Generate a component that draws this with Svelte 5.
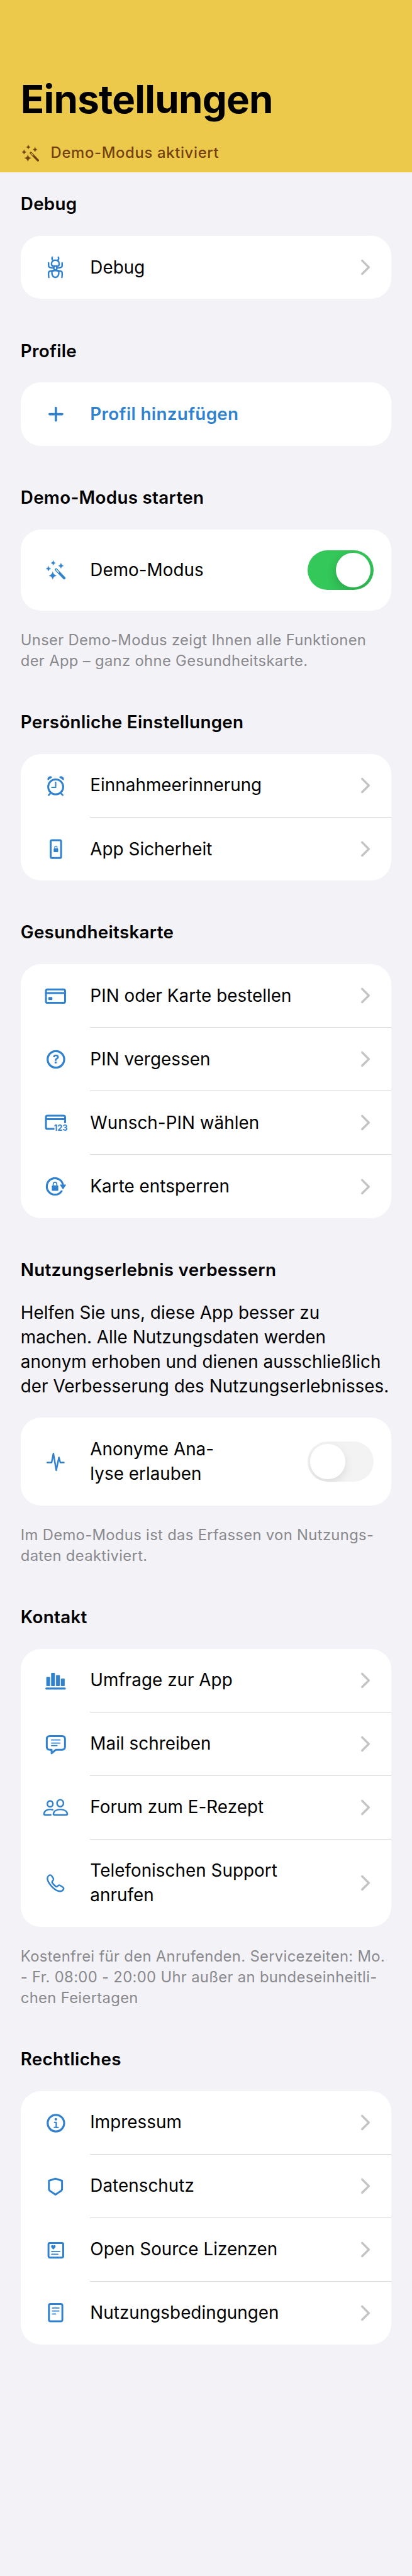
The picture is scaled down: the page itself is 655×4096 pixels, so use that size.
<script>
  let demoMode = $state(true);

  const sections = [
    { title: 'Debug', rows: [{ icon: 'bug', label: 'Debug' }] },
    { title: 'Profile', rows: [{ icon: 'plus', label: 'Profil hinzufügen', kind: 'action' }] },
    {
      title: 'Demo-Modus starten',
      rows: [{ icon: 'wand', label: 'Demo-Modus', kind: 'switch' }],
      foot: ['Unser Demo-Modus zeigt Ihnen alle Funktionen', 'der App – ganz ohne Gesundheitskarte.']
    },
    {
      title: 'Persönliche Einstellungen',
      rows: [
        { icon: 'alarm', label: 'Einnahmeerinnerung' },
        { icon: 'device', label: 'App Sicherheit' }
      ]
    },
    {
      title: 'Gesundheitskarte',
      rows: [
        { icon: 'card', label: 'PIN oder Karte bestellen' },
        { icon: 'question', label: 'PIN vergessen' },
        { icon: 'cardpin', label: 'Wunsch-PIN wählen' },
        { icon: 'unlock', label: 'Karte entsperren' }
      ]
    },
    {
      title: 'Nutzungserlebnis verbessern',
      intro: [
        'Helfen Sie uns, diese App besser zu',
        'machen. Alle Nutzungsdaten werden',
        'anonym erhoben und dienen ausschließlich',
        'der Verbesserung des Nutzungserlebnisses.'
      ],
      rows: [{ icon: 'pulse', label: 'Anonyme Ana-\nlyse erlauben', kind: 'disabled', tall: true }],
      foot: ['Im Demo-Modus ist das Erfassen von Nutzungs-', 'daten deaktiviert.']
    },
    {
      title: 'Kontakt',
      rows: [
        { icon: 'bars', label: 'Umfrage zur App' },
        { icon: 'bubble', label: 'Mail schreiben' },
        { icon: 'people', label: 'Forum zum E-Rezept' },
        { icon: 'phone', label: 'Telefonischen Support\nanrufen', tall: true }
      ],
      foot: [
        'Kostenfrei für den Anrufenden. Servicezeiten: Mo.',
        '- Fr. 08:00 - 20:00 Uhr außer an bundeseinheitli-',
        'chen Feiertagen'
      ]
    },
    {
      title: 'Rechtliches',
      rows: [
        { icon: 'info', label: 'Impressum' },
        { icon: 'shield', label: 'Datenschutz' },
        { icon: 'licence', label: 'Open Source Lizenzen' },
        { icon: 'document', label: 'Nutzungsbedingungen' }
      ]
    }
  ];

  // Four-pointed sparkle centred on (x, y)
  const star = (x, y, r) => {
    const k = r * 0.17;
    return `M${x} ${y - r}Q${x + k} ${y - k} ${x + r} ${y}Q${x + k} ${y + k} ${x} ${y + r}Q${x - k} ${y + k} ${x - r} ${y}Q${x - k} ${y - k} ${x} ${y - r}z`;
  };
</script>

{#snippet wand(background)}
  <g fill="currentColor" stroke="currentColor" stroke-width=".6">
    <path d={star(30.3, 13.4, 5.2)} />
    <path d={star(48.3, 20, 6)} />
    <path d={star(19, 26.6, 5.8)} />
    <path d={star(29, 42.8, 8.6)} />
  </g>
  <path d="M37 29L56 48.8" stroke-width="6" />
  <path d="M37.2 29.3L43 35.3" stroke={background} stroke-width="2.2" />
{/snippet}

{#snippet glyph(name)}
  <svg class="icon" viewBox="0 0 72 60" fill="none" stroke="currentColor" stroke-width="4.4" stroke-linecap="round" stroke-linejoin="round">
    {#if name === 'bug'}
      <g stroke-width="3.6">
        <path d="M28 5.8c-1.3 3.4-.4 6 2.2 7.8M42.3 5.8c1.3 3.4.4 6-2.2 7.8" />
        <path d="M26.2 21.5c0-5.5 3.5-8.6 9-8.6s9 3.1 9 8.6c0 3-1.9 4.7-4.5 4.7h-9c-2.6 0-4.5-1.7-4.5-4.7z" />
        <ellipse cx="35.2" cy="31" rx="3.7" ry="4.4" />
        <path d="M19.4 19v6.3c0 3 1.5 4.4 4.5 4.7l7 .8M51 19v6.3c0 3-1.5 4.4-4.5 4.7l-7 .8" />
        <path d="M20 53c-.9-5-1-8-.6-11 .3-2.2 1.5-3.3 4-3.8l8.2-1.5M50.4 53c.9-5 1-8 .6-11-.3-2.2-1.5-3.3-4-3.8l-8.2-1.5" />
        <path d="M27.2 39.5c-.6 7 1.9 13.3 8 13.3s8.6-6.3 8-13.3c-2-1.8-5-2.5-8-2.5s-6 .7-8 2.5z" />
      </g>
    {:else if name === 'plus'}
      <path d="M36.500 15.500v29.500M21.700 30.200h29.600" stroke-width="5.300" />
    {:else if name === 'wand'}
      {@render wand('#fff')}
    {:else if name === 'alarm'}
      <circle cx="36" cy="32.500" r="17.500" />
      <path d="M36 21.500v12.200h-9" stroke-width="3" />
      <path d="M23 48.500l-3.300 3.200M49 48.500l3.300 3.200" stroke-width="3.800" />
      <path d="M18 16c-1.600-5.200 4.300-9.200 9-6.200zM54 16c1.600-5.200-4.300-9.200-9-6.200z" fill="currentColor" stroke-width="1.800" />
    {:else if name === 'device'}
      <rect x="24.300" y="8.900" width="24.300" height="41.500" rx="3" />
      <rect x="31.300" y="28" width="10.400" height="8.600" rx="1.200" fill="currentColor" stroke="none" />
      <path d="M33.600 28.500v-2.500a2.900 3.300 0 0 1 5.800 0v2.500" stroke-width="1.800" />
    {:else if name === 'card'}
      <rect x="13.300" y="14.900" width="44.600" height="31.400" rx="3.500" />
      <path d="M13.300 23.600h44.600" />
      <rect x="19" y="32.800" width="9.200" height="7.200" rx="1.800" fill="currentColor" stroke="none" />
    {:else if name === 'question'}
      <circle cx="36.500" cy="30" r="19.300" stroke-width="4.800" />
      <text x="36.500" y="40" font-size="28" text-anchor="middle">?</text>
    {:else if name === 'cardpin'}
      <path d="M33 44.200H16.800c-2.300 0-3.500-1.200-3.500-3.500v-24c0-2.300 1.200-3.500 3.500-3.500h37.600c2.300 0 3.500 1.200 3.500 3.500V30.300M13.300 21.400h44.600" stroke-linecap="butt" />
      <text class="digits" x="31.800" y="48" font-size="19.700" textLength="32" lengthAdjust="spacingAndGlyphs">123</text>
    {:else if name === 'unlock'}
      <path d="M53.200 27.500A19.100 19.100 0 1 0 49.800 41.200" stroke-width="4.600" />
      <path d="M47.200 26.700h11.800l-5.900 8.700z" fill="currentColor" stroke-width="2.200" />
      <rect x="27" y="27.800" width="15" height="12.600" rx="1.800" fill="currentColor" stroke="none" />
      <path d="M30.200 28.500v-3.500a4.200 4.600 0 0 1 8.400 0v3.500" stroke-width="2.500" />
    {:else if name === 'pulse'}
      <path d="M16.500 31.600h10L30.700 10.800 37.300 49.600 43.500 19.800 46.700 31.600h8.300" stroke-width="3.700" />
    {:else if name === 'bars'}
      <path d="M14 48.300h43.300" stroke-width="4.600" />
      <g fill="currentColor" stroke="none">
        <rect x="14.100" y="21.300" width="8.900" height="21.400" rx="1.500" />
        <rect x="25.300" y="11.600" width="9" height="31.100" rx="1.500" />
        <rect x="36.800" y="16.700" width="9" height="26" rx="1.500" />
        <rect x="48" y="24.900" width="9" height="17.800" rx="1.500" />
      </g>
    {:else if name === 'bubble'}
      <path d="M22 11h29c4.500 0 6.700 2.300 6.700 6.800v18.200c0 4.500-2.200 6.800-6.700 6.800H36.500L26.500 51V42.800H22c-4.500 0-6.800-2.300-6.800-6.800V17.800C15.200 13.300 17.500 11 22 11z" />
      <path d="M26.300 20h19.800M26.300 27.200h19.800M26.300 33.200h12.800" stroke-width="2.600" />
    {:else if name === 'people'}
      <g stroke-width="3.600">
        <ellipse cx="46.600" cy="19.400" rx="7.500" ry="8.200" />
        <ellipse cx="23" cy="20.800" rx="6.500" ry="7" />
        <path d="M30.600 44.500C31.500 38 38 33.900 46.900 33.900S62.300 38 63.200 44.500c.1 1.400-.5 2-2 2H32.600c-1.500 0-2.100-.6-2-2z" />
        <path d="M24.500 46.500H10.600c-1.500 0-2.100-.6-2-2C9.600 37.600 15.500 33.900 23 33.900c2.300 0 4.300.3 6 .8" />
      </g>
    {:else if name === 'phone'}
      <path d="M23.500 10.800c2 0 3 1.500 4 3.200l3 5c1 1.800.5 3-.6 4.300l-2 2.300c-1 1.200-.9 2 0 3.400 2.300 3.500 5 6.300 8.500 8.600 1.400.9 2.300.9 3.400-.1l2.200-2c1.300-1.100 2.600-1.400 4.200-.4l6 3.800c2.500 1.700 2.900 3.500 1.700 5.600-2.400 4-6.500 5.200-12 3.600C33 45.500 20.500 33 17.200 22.500c-1.400-5 .5-9.200 4-11.200.8-.4 1.500-.5 2.300-.5z" stroke-width="3.600" />
    {:else if name === 'info'}
      <circle cx="36.500" cy="30.800" r="19.200" stroke-width="4.700" />
      <circle cx="36.400" cy="21.600" r="3" fill="currentColor" stroke="none" />
      <path d="M33.300 29h3.900v11.700M32.700 40.700h9" stroke-width="3.200" />
    {:else if name === 'shield'}
      <path d="M35.500 12L50.800 16.800V35.500c0 3-1.700 5-4.300 6.500L35.500 49.300 24.500 42c-2.600-1.500-4.300-3.500-4.300-6.500V16.800z" />
    {:else if name === 'licence'}
      <rect x="19.200" y="13.800" width="34.300" height="34.100" rx="3" />
      <path d="M30.500 28.500c-7-4.500-5.500-9.300-2.600-9.300 1.400 0 2.200.8 2.600 1.700.4-.9 1.200-1.700 2.600-1.700 2.900 0 4.400 4.800-2.600 9.300z" fill="currentColor" stroke-width=".6" />
      <path d="M26.500 33.600h19.500M26.500 40.300h14.800" stroke-width="2.600" />
    {:else if name === 'document'}
      <rect x="20.200" y="9.700" width="31.300" height="40.200" rx="3.500" />
      <path d="M28.300 18.900h15.400M28.300 25.800h15.400M28.300 32.900h7.600" stroke-width="2.600" />
    {/if}
  </svg>
{/snippet}

<div class="page">
  <header>
    <h1>Einstellungen</h1>
    <div class="banner">
      <svg viewBox="0 0 72 60" fill="none" stroke="currentColor" stroke-linecap="round">{@render wand('#ecc94b')}</svg>
      <span>Demo-Modus aktiviert</span>
    </div>
  </header>

  <main>
    {#each sections as section}
      <section class:noted={section.foot}>
        <h2>{section.title}</h2>
        {#if section.intro}
          <p class="intro">{section.intro.join('\n')}</p>
        {/if}
        <div class="card">
          {#each section.rows as row}
            <div class="row" class:tall={row.tall} class:switch-row={row.kind === 'switch'}>
              <div class="lead">{@render glyph(row.icon)}</div>
              <div class="body">
                <span class="label" class:action={row.kind === 'action'}>{row.label}</span>
                {#if row.kind === 'switch'}
                  <button class="toggle" class:on={demoMode} role="switch" aria-checked={demoMode} aria-label={row.label} onclick={() => (demoMode = !demoMode)}><i></i></button>
                {:else if row.kind === 'disabled'}
                  <button class="toggle" role="switch" aria-checked="false" aria-label={row.label} disabled><i></i></button>
                {:else if !row.kind}
                  <svg class="chevron" viewBox="0 0 24 38" fill="none" stroke="#c4c4c6" stroke-width="5" stroke-linecap="round" stroke-linejoin="round"><path d="M4 3.500L19.500 19 4 34.500" /></svg>
                {/if}
              </div>
            </div>
          {/each}
        </div>
        {#if section.foot}
          <p class="foot">{section.foot.join('\n')}</p>
        {/if}
      </section>
    {/each}
  </main>
</div>

<style>
  :global(body) {
    margin: 0;
    background: #f2f2f7;
  }

  .page {
    --u: 2.048px;
    width: 655px;
    height: 4096px;
    overflow: hidden;
    box-sizing: border-box;
    background: #f2f2f7;
    color: #000;
    font-family: Inter, 'Liberation Sans', sans-serif;
    font-size: 27.8px;
    line-height: calc(19 * var(--u));
    letter-spacing: 0.04px;
  }

  header {
    height: calc(134 * var(--u));
    box-sizing: border-box;
    padding: calc(57 * var(--u)) calc(16 * var(--u)) 0;
    background: #ecc94b;
  }

  h1 {
    margin: 0;
    font-size: 61.8px;
    line-height: calc(40 * var(--u));
    font-weight: 700;
    letter-spacing: -0.77px;
    white-space: nowrap;
  }

  .banner {
    display: flex;
    align-items: center;
    height: calc(16 * var(--u));
    margin-top: calc(13.9 * var(--u));
    color: #744210;
    font-size: 23.8px;
    font-weight: 500;
    line-height: calc(16 * var(--u));
    letter-spacing: 0.68px;
    white-space: nowrap;
  }

  .banner svg {
    flex: none;
    width: 42.8px;
    height: 35.6px;
    margin-left: -5.8px;
    margin-right: 10.8px;
  }

  main {
    padding: calc(15 * var(--u)) calc(16 * var(--u)) 0;
  }

  section {
    margin-bottom: calc(30.9 * var(--u));
  }

  section.noted {
    margin-bottom: calc(29.9 * var(--u));
  }

  h2 {
    margin: 0 0 calc(15.1 * var(--u));
    font-size: 27.8px;
    line-height: calc(19 * var(--u));
    font-weight: 600;
    letter-spacing: 0.29px;
    white-space: nowrap;
  }

  .intro {
    margin: calc(-1 * var(--u)) 0 calc(15.1 * var(--u));
    white-space: pre;
  }

  .card {
    overflow: hidden;
    border-radius: 32px;
    background: #fff;
  }

  .row {
    display: flex;
    height: calc(49 * var(--u));
  }

  .row.switch-row {
    height: calc(63 * var(--u));
  }

  .row.tall {
    height: calc(68 * var(--u));
  }

  .row:not(:last-child) {
    height: calc(49.333 * var(--u));
  }

  .row:not(:last-child) .body {
    border-bottom: 1px solid #d6d6d8;
  }

  .lead {
    flex: none;
    display: flex;
    align-items: center;
    justify-content: center;
    width: calc(54 * var(--u));
    color: #3182ce;
  }

  .icon {
    width: 49.1px;
    height: 40.9px;
  }

  .icon text {
    fill: currentColor;
    stroke: none;
    font-family: Inter, sans-serif;
    font-weight: 700;
    letter-spacing: 0;
  }

  .body {
    flex: 1;
    display: flex;
    align-items: center;
    justify-content: space-between;
    padding-right: calc(14 * var(--u));
  }

  .label {
    white-space: pre;
  }

  .label.action {
    color: #3182ce;
    font-weight: 600;
    letter-spacing: 0.33px;
  }

  .chevron {
    width: 16.4px;
    height: 25.9px;
    margin-right: calc(2.2 * var(--u));
  }

  .toggle {
    flex: none;
    display: flex;
    width: calc(51 * var(--u));
    height: calc(31 * var(--u));
    padding: calc(2 * var(--u));
    border: 0;
    border-radius: calc(15.5 * var(--u));
    background: #f3f3f3;
    overflow: hidden;
  }

  .toggle i {
    width: calc(27 * var(--u));
    height: calc(27 * var(--u));
    border-radius: 50%;
    background: #fff;
    box-shadow: 0 6px 16px rgba(0, 0, 0, 0.1);
  }

  .toggle.on {
    justify-content: flex-end;
    background: #34c759;
  }

  .toggle.on i {
    box-shadow: 0 6px 16px rgba(0, 0, 0, 0.18);
  }

  .foot {
    margin: calc(15.3 * var(--u)) 0 0;
    color: #8a8a8e;
    font-size: 23.8px;
    line-height: calc(16 * var(--u));
    letter-spacing: 0.33px;
    white-space: pre;
  }
</style>
